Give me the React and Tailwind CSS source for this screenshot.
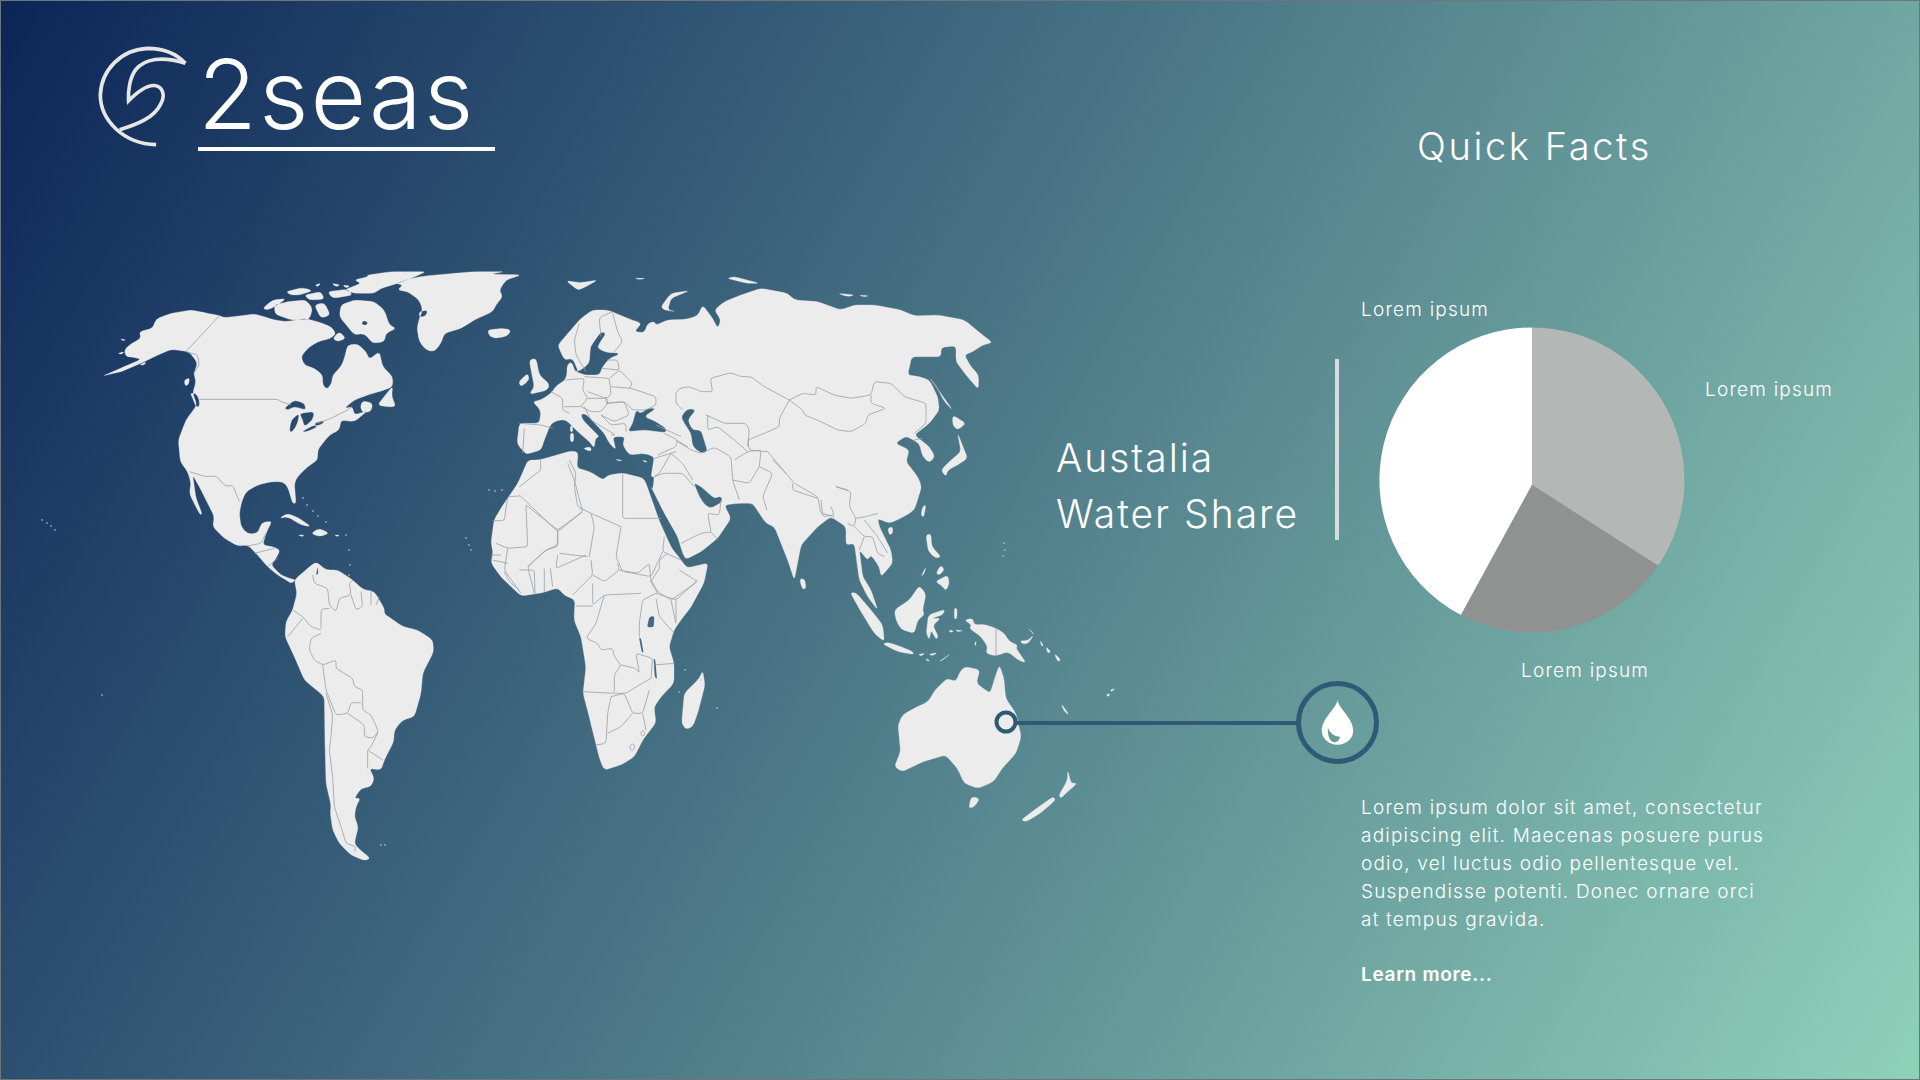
// Slide "2seas": mapa mundial con ficha de datos de Australia
const NORTH_AMERICA = [
  "M35 378 100 350 150 328 130 322 105 320 100 300 118 282 150 265 145 245 185 235 195 207 240 190 300 180 340 188 385 197 400 203 450 197 490 192 520 200 550 210 590 215 640 205 680 215 720 230 735 250 720 265 680 275 650 295 630 320 640 345 670 355 695 375 695 405 708 418 722 400 725 375 750 350 760 325 770 285 800 282 825 305 835 328 865 305 875 350 905 380 905 410 880 420 830 435 790 450 760 475 785 470 790 495 830 482 790 515 750 510 745 540 715 555 695 580 680 600 680 630 650 650 620 680 610 700 615 760 605 760 590 710 575 695 540 695 500 705 465 725 452 755 445 790 450 830 470 852 500 850 512 818 543 813 525 850 515 885 545 890 568 900 555 925 540 945 570 975 595 985 615 990 600 1000 585 990 560 975 530 950 495 910 470 885 440 888 400 865 365 830 370 800 345 750 325 710 305 675 315 745 333 790 328 795 312 765 295 730 300 700 290 665 268 635 262 570 285 510 318 465 305 430 315 395 308 370 320 340 295 305 240 298 190 320 150 340 90 365Z",
  "M580 475 610 450 640 460 645 480 610 470 590 480Z",
  "M595 545 600 510 625 490 620 520 605 545Z",
  "M625 490 670 485 665 510 640 530 635 510Z",
  "M632 545 670 525 680 530 650 545Z",
  "M670 520 700 510 695 522 675 528Z",
  "M298 430 315 430 325 450 325 470 315 470 305 445Z",
  "M815 452 845 460 840 485 815 488 808 470Z",
  "M280 390 296 384 292 405 282 407Z",
  "M915 100 960 85 1000 78 1090 70 1150 65 1240 65 1200 72 1290 75 1245 90 1225 120 1235 140 1215 165 1205 185 1150 210 1110 235 1060 250 1050 280 1030 305 1005 300 985 275 978 235 985 205 995 180 985 150 950 125 920 120 935 105Z",
  "M985 185 1010 180 1005 198 985 202Z",
  "M830 75 900 65 1005 65 960 85 920 100 870 115 850 130 790 130 760 120 810 100 790 90 830 80Z",
  "M750 165 790 150 850 155 880 180 895 225 915 235 885 250 880 275 845 280 820 250 790 255 770 230 745 200Z",
  "M815 212 830 215 828 226 812 224Z",
  "M550 165 590 155 645 150 665 175 655 208 600 210 552 192Z",
  "M515 175 545 150 585 146 560 165 530 180Z",
  "M585 125 635 113 665 122 625 135 600 135Z",
  "M640 135 690 125 700 148 655 150Z",
  "M670 165 700 158 718 195 690 205Z",
  "M710 125 770 118 785 135 725 145Z",
  "M722 100 748 105 735 110Z",
  "M755 105 778 108 765 114Z",
  "M672 105 690 100 680 110Z",
  "M725 265 745 245 765 265 740 275Z",
  "M1190 240 1235 235 1260 240 1250 258 1215 265 1195 258Z",
  "M860 465 895 420 905 410 902 440 915 470 885 470Z",
  "M565 805 590 790 625 805 660 830 630 825 590 800Z",
  "M660 850 685 835 715 850 685 860Z",
  "M730 855 745 855 740 860Z",
  "M620 855 640 855 635 860Z",
  "M80 310 100 305 92 313Z",
  "M88 266 105 270 95 272Z",
  "M145 345 165 335 160 345Z",
];

const NA_BORDERS = [
  "M385 197 285 305",
  "M285 305 320 315 325 345 308 370",
  "M325 448 560 448 570 455 600 465",
  "M680 520 720 505 770 480 785 468",
  "M295 665 345 680 375 678 405 710 425 705 445 755",
  "M470 888 510 880 525 850",
  "M490 910 550 895",
  "M530 950 560 925",
  "M1285 735 1400 845 1475 785 1450 690 1430 640",
  "M1205 812 1240 812 1250 740 1285 738",
  "M1305 765 1310 890 1250 895 1215 880",
  "M1400 845 1400 890 1365 900 1310 950 1330 1030",
  "M1250 895 1240 960 1290 1030",
  "M1205 930 1250 940",
];

const SOUTH_AMERICA =
  "M135 35 165 60 200 60 245 90 275 118 310 125 340 175 340 192 360 205 395 230 440 240 485 270 488 305 455 370 450 430 430 500 395 510 370 540 368 575 340 630 330 660 295 655 310 685 300 710 270 715 250 745 268 745 255 770 250 800 262 830 250 880 262 895 298 925 280 932 240 915 205 880 185 840 178 790 180 765 165 700 162 580 160 440 100 390 70 320 42 260 45 215 65 180 78 130 70 90 110 55Z";

const MADAGASCAR = "M1295 362 1302 405 1280 490 1265 530 1245 538 1232 520 1240 430 1285 385Z";

const LAKES = [
  "M135 75 140 50 142 72Z",
  "M1128 232 1135 200 1150 198 1148 232Z",
  "M1104 262 1110 265 1118 310 1112 305Z",
  "M1148 325 1153 330 1158 388 1151 380Z",
];

const SA_AFRICA_BORDERS = [
  "M125 75 130 100 170 115 175 165 195 185 205 145 240 135 235 100 245 90",
  "M240 135 255 180 275 170 270 125",
  "M300 120 300 165",
  "M325 140 315 165",
  "M175 175 150 178 150 235",
  "M65 180 95 200 120 230 150 240",
  "M50 260 95 205",
  "M150 250 120 265 115 300 130 330 155 345 195 330 195 355 245 385 250 410 275 420 275 480 300 495 312 520 322 545 300 590 290 600 335 630",
  "M155 345 165 420 195 495 230 490 240 458 270 458",
  "M165 430 185 495 180 560 175 600 185 680 190 770 210 830 225 880 255 890 250 905",
  "M230 490 280 525 280 560 305 565 322 545",
  "M290 600 290 655",
  "M660 15 690 15",
  "M700 65 715 95 745 120",
  "M745 60 790 60 792 130",
  "M820 55 820 125",
  "M838 55 845 110",
  "M860 15 855 55 945 15",
  "M960 30 965 75 905 135",
  "M965 100 965 165 1000 135 1110 130",
  "M915 168 965 168",
  "M1000 135 975 220 945 265 980 280 990 300 1025 295 1030 320 1050 345 1030 375 1030 430 935 425",
  "M1050 345 1095 355 1105 370 1095 310 1145 325 1140 385",
  "M1030 430 1065 430 1105 405 1140 385",
  "M1020 440 1010 490 1005 580 975 585",
  "M1020 440 1060 430 1085 490 1115 490 1135 420",
  "M1010 550 1050 530 1085 490",
  "M1115 490 1125 540",
  "M1155 130 1115 150 1105 220 1105 260",
  "M1155 145 1165 200 1210 250",
  "M1215 150 1215 215",
  "M1155 130 1215 150 1280 90",
  "M1140 95 1160 130",
  "M1045 60 1100 70 1135 40 1140 95",
  "M1040 40 1045 60 1000 95 965 75",
  "M1165 55 1140 95",
  "M1190 10 1165 30 1165 55",
  "M1150 345 1210 340",
  "M1075 590 1085 580 1093 590 1082 605Z",
  "M1108 550 1115 540 1123 550 1115 560Z",
];

// África en coordenadas de página
const AFRICA =
  "M527 460 538 460 570 451 577 452 576 468 590 472 602 480 607 475 622 473 642 478 645 483 658 520 670 547 680 560 686 568 707 563 703 583 690 607 680 620 673 630 668 647 673 663 673 683 660 697 653 707 655 723 643 738 633 757 620 765 603 770 598 757 589 720 582 693 585 667 580 637 573 620 574 600 563 595 557 588 540 593 520 596 500 577 490 563 492 552 490 543 493 520 500 508 517 483Z";

const EURASIA = [
  "M85 580 75 582 48 552 55 490 115 490 120 452 95 425 120 420 150 400 165 378 190 362 198 345 198 315 212 305 222 335 232 335 215 295 190 300 172 260 175 250 240 175 275 150 320 150 380 175 422 190 400 215 430 218 440 190 460 185 465 195 500 180 555 178 590 168 605 135 635 175 650 205 660 180 640 150 670 125 720 105 780 85 860 100 880 120 950 125 1020 150 1060 135 1120 135 1200 150 1240 168 1310 165 1390 180 1445 225 1475 248 1445 255 1415 275 1390 285 1410 320 1433 345 1432 388 1395 345 1365 305 1365 258 1320 262 1320 290 1232 290 1220 345 1255 350 1285 360 1310 410 1315 450 1285 490 1240 525 1285 560 1302 590 1285 608 1265 590 1255 550 1215 528 1183 550 1225 570 1215 605 1250 650 1262 680 1240 750 1205 772 1165 790 1130 775 1135 800 1170 870 1175 910 1140 950 1135 920 1110 885 1100 900 1075 870 1080 910 1085 950 1110 990 1130 1050 1100 1010 1075 960 1060 850 1035 855 1035 800 990 770 950 800 900 855 880 960 860 900 820 800 795 790 755 730 710 730 670 735 690 775 650 835 600 875 555 898 545 880 530 830 490 760 450 680 455 690 460 650 450 650 460 590 430 580 385 585 365 555 372 530 335 530 345 570 325 550 310 520 255 462 240 462 245 480 295 530 283 535 280 565 265 545 230 515 195 480 175 480 150 490 130 540 120 570Z",
  "M240 340 222 335 240 330 265 310 268 260 300 215 315 220 295 250 290 265 318 278 350 278 352 285 325 295 305 320 295 345 250 345Z",
  "M540 470 560 445 585 450 560 480 575 510 600 510 620 575 600 580 575 560 570 520 550 490Z",
  "M395 490 380 515 430 510 495 518 495 505 465 485 430 470 465 445 440 445 420 460 405 450Z",
  "M578 668 600 680 640 715 660 708 665 725 630 745 612 735 595 710Z",
  "M900 955 912 960 915 985 905 988 897 965Z",
  "M85 300 105 295 115 345 145 372 140 390 85 403 100 380 90 330Z",
  "M53 365 80 340 85 360 60 380Z",
  "M245 565 270 560 270 575Z",
  "M208 520 218 520 218 545 208 545Z",
  "M208 498 215 498 215 515 208 515Z",
  "M345 597 365 602 350 602Z",
  "M425 600 440 605 430 606Z",
  "M195 62 240 68 290 60 245 85 230 90Z",
  "M400 55 435 55 415 58Z",
  "M480 140 510 100 565 92 510 115 500 150 525 155 490 150Z",
  "M678 55 700 50 775 70 740 70Z",
  "M1010 100 1060 105 1040 110Z",
  "M1075 105 1105 108 1085 110Z",
  "M1320 630 1345 605 1380 575 1370 520 1400 595 1370 615 1340 630 1335 650Z",
  "M1355 465 1395 490 1370 510 1355 495Z",
  "M1285 352 1355 450 1330 425 1310 385Z",
  "M1265 740 1275 735 1268 772 1260 765Z",
  "M1160 805 1175 800 1175 820 1165 825Z",
];

const EURASIA_BORDERS = [
  "M118 595 120 630 55 680",
  "M205 600 225 640 220 680 230 740 270 760 360 800",
  "M365 640 365 775 480 775",
  "M245 755 170 810 75 735",
  "M360 800 350 860 345 890 365 935",
  "M270 760 280 800 265 890",
  "M170 810 170 855 135 870 80 920",
  "M175 880 260 890",
  "M490 830 485 875 540 900",
  "M485 875 450 950 370 935",
  "M450 960 470 995 510 1020 590 965 535 930",
  "M510 1020 525 1090",
  "M460 650 475 640 510 580",
  "M460 650 485 640 545 640 580 680",
  "M510 580 545 610 575 660",
  "M525 575 460 595",
  "M530 545 570 570 600 580 640 562 690 590 695 660 715 720",
  "M695 660 745 670 775 620 780 570 740 575 700 600",
  "M775 620 815 640 785 710 798 750",
  "M815 600 855 640 880 670 950 710 960 760 1000 770",
  "M800 575 855 640",
  "M875 670 875 690 950 715",
  "M960 720 965 770 1000 765 990 740",
  "M1005 680 1050 695 1045 740 1065 775 1060 800 1040 790",
  "M540 850 600 820 630 815 650 840",
  "M630 815 620 760 655 765 660 720",
  "M525 400 535 385 565 380 600 395 635 395 628 355 690 338 720 350 750 350 790 380 865 420",
  "M865 420 905 400 945 405 945 380 1000 405 1050 415 1110 405 1120 365 1170 370 1210 410 1275 430 1275 490 1240 520",
  "M865 420 905 450 910 465 960 485 1010 510 1050 515 1095 490 1100 465 1155 445 1110 430 1110 405",
  "M865 420 835 475 835 500 790 520 740 540 745 570 800 575",
  "M615 465 670 490 735 490 745 510 740 560",
  "M620 465 620 510 650 500 700 540 740 575",
  "M525 400 525 430 545 450",
  "M1240 540 1265 535",
  "M1005 680 1040 690",
  "M1065 775 1095 770 1130 760",
  "M1090 780 1130 830 1160 880",
  "M1060 800 1090 830 1115 830 1130 880 1150 890",
  "M1075 870 1090 830",
];

// Bordes de Europa, calcados a mayor aumento
const EUROPE_BORDERS = [
  "M150 275 185 295 185 330 205 340",
  "M70 385 65 460",
  "M55 370 120 375 155 385",
  "M190 240 250 235 245 270 260 295 240 320 190 320",
  "M250 230 325 235 330 285 315 295 260 275",
  "M330 260 390 265 465 290 465 315 435 330 395 330 370 305 315 310 315 295",
  "M325 235 355 210 395 250 385 265",
  "M300 205 355 210 350 180 320 180",
  "M260 295 320 295 320 310 300 335 270 335 240 320",
  "M315 310 370 305 385 345 340 365 300 345",
  "M300 345 330 375 375 370 375 395",
  "M310 385 345 405 330 405",
  "M235 70 220 120 225 165 255 215",
  "M295 60 300 50 335 35",
  "M295 60 300 110",
  "M335 40 350 95 365 125 340 155",
  "M465 375 540 410",
  "M490 400 530 420 525 440 470 465",
  "M525 420 560 440",
  "M250 320 270 360 310 385",
];

const OCEANIA = [
  "M255 45 270 42 272 80 300 110 285 115 262 95Z",
  "M285 160 300 135 310 150 295 165Z",
  "M283 185 320 165 325 190 315 212 300 195Z",
  "M240 170 255 140 250 160Z",
  "M160 270 205 240 235 197 255 222 245 270 250 285 230 300 220 340 180 328 165 300Z",
  "M262 285 312 268 305 285 270 295 300 295 275 315 292 350 285 358 270 330 265 360 256 340Z",
  "M28 218 45 218 90 270 125 315 130 365 100 340 60 275Z",
  "M125 372 140 367 180 380 215 395 218 403 170 395Z",
  "M232 403 252 400 240 408Z",
  "M262 403 290 398 275 407Z",
  "M255 415 267 423 258 423Z",
  "M295 425 330 400 305 420Z",
  "M370 300 395 295 400 315 430 313 465 325 490 340 505 365 530 375 525 385 555 428 535 422 500 395 465 408 435 400 440 380 420 350 385 325 392 315Z",
  "M537 362 560 362 578 345 562 370 545 372Z",
  "M562 325 582 345 570 335Z",
  "M322 333 335 330 335 338Z",
  "M342 330 368 332 350 335Z",
  "M400 375 405 362 405 376Z",
  "M340 265 348 265 348 295 340 298Z",
  "M598 360 608 380 600 375Z",
  "M615 380 630 395 620 400Z",
  "M640 400 660 420 650 425Z",
  "M660 550 685 585 670 575Z",
  "M795 525 805 520 805 530Z",
  "M808 510 822 505 812 515Z",
];

const AUSTRALIA = [
  "M110 310 120 285 160 262 195 245 215 210 250 175 275 185 290 150 305 140 345 150 335 190 375 220 390 170 402 135 415 175 420 235 450 280 465 350 450 400 410 445 385 485 340 505 300 490 280 445 245 405 180 425 120 455 97 440 115 395 108 320Z",
  "M320 530 345 535 330 560 313 565Z",
  "M600 450 610 490 628 490 600 515 580 535 575 525 600 480Z",
  "M465 600 510 565 558 530 565 540 520 580 480 605Z",
];

// Islas diminutas en coordenadas de página
const SPECKS = [
  [41, 520], [46, 523], [50, 526], [54, 530], [101, 695], [302, 498], [306, 505], [312, 511], [317, 516], [325, 522],
  [345, 535], [348, 550], [349, 565], [348, 575], [488, 490], [494, 491], [501, 490], [465, 538], [468, 545], [470, 550],
  [380, 845], [384, 845], [678, 692], [684, 670], [700, 680], [716, 708], [1003, 543], [1004, 550], [1002, 556],
];

// Redondea las esquinas de cada trazo para que la costa no se vea poligonal
function smooth(d, cap = 12) {
  return d
    .split("M")
    .filter(Boolean)
    .map((part) => {
      const closed = part.includes("Z");
      const n = part.replace("Z", "").trim().split(/\s+/).map(Number);
      const pts = [];
      for (let i = 0; i < n.length; i += 2) pts.push([n[i], n[i + 1]]);
      if (pts.length < 3) return "M" + part;
      const toward = (a, b) => {
        const dx = b[0] - a[0];
        const dy = b[1] - a[1];
        const k = Math.min(0.4, cap / (Math.hypot(dx, dy) || 1));
        return [(a[0] + dx * k).toFixed(1), (a[1] + dy * k).toFixed(1)];
      };
      let out = "";
      pts.forEach((p, i) => {
        const prev = pts[(i - 1 + pts.length) % pts.length];
        const next = pts[(i + 1) % pts.length];
        if (!closed && i === 0) {
          out += `M${p[0]} ${p[1]}`;
        } else if (!closed && i === pts.length - 1) {
          out += `L${p[0]} ${p[1]}`;
        } else {
          const a = toward(p, prev);
          const b = toward(p, next);
          out += `${out ? "L" : "M"}${a[0]} ${a[1]}Q${p[0]} ${p[1]} ${b[0]} ${b[1]}`;
        }
      });
      return out + (closed ? "Z" : "");
    })
    .join(" ");
}

function Borders({ list }) {
  return list.map((d) => <path key={d} d={smooth(d, 8)} vectorEffect="non-scaling-stroke" />);
}

function WorldMap() {
  return (
    <svg viewBox="0 150 1056 930" width="1056" height="930" className="block overflow-visible">
      <g fill="#ececec" fillRule="evenodd" stroke="#ececec" strokeLinejoin="round">
        <g transform="translate(90 250) scale(.33333)" strokeWidth="1">
          <path d={smooth(NORTH_AMERICA.join(" "))} />
        </g>
        <g transform="translate(270 550) scale(.33333)" strokeWidth="1">
          <path d={smooth(SOUTH_AMERICA)} />
          <path d={smooth(MADAGASCAR)} />
        </g>
        <path d={smooth(AFRICA, 4)} strokeWidth=".3" />
        <g transform="translate(500 260) scale(.33333)" strokeWidth="1">
          <path d={smooth(EURASIA.join(" "))} />
        </g>
        <g transform="translate(840 520) scale(.33333)" strokeWidth="1">
          <path d={smooth(OCEANIA.join(" "))} />
        </g>
        <g transform="translate(860 620) scale(.34437 .33333)" strokeWidth="1">
          <path d={smooth(AUSTRALIA.join(" "))} />
        </g>
      </g>
      {/* Lagos de África y Colombia, con el color del fondo a esa altura */}
      <g transform="translate(270 550) scale(.33333)" fill="#436a80">
        {LAKES.map((d) => <path key={d} d={smooth(d, 6)} />)}
      </g>
      <g fill="none" stroke="#9a9fa3" strokeWidth=".8" strokeLinejoin="round">
        <g transform="translate(90 250) scale(.33333)"><Borders list={NA_BORDERS} /></g>
        <g transform="translate(270 550) scale(.33333)"><Borders list={SA_AFRICA_BORDERS} /></g>
        <g transform="translate(500 260) scale(.33333)"><Borders list={EURASIA_BORDERS} /></g>
        <g transform="translate(500 300) scale(.33333)"><Borders list={EUROPE_BORDERS} /></g>
        <path d="M995 628V656" />
      </g>
      <g fill="#c3cbcf" fillOpacity=".7">
        {SPECKS.map(([x, y]) => <circle key={x + "-" + y} cx={x} cy={y} r=".9" />)}
      </g>
      {/* Conector hasta el icono de agua */}
      <path d="M1016 723H1298" stroke="#2f5a75" strokeWidth="4" fill="none" />
      <circle cx="1005" cy="722" r="9.5" fill="#ececec" stroke="#2f5a75" strokeWidth="4" />
    </svg>
  );
}

function Logo() {
  return (
    <svg viewBox="55 75 268 310" width="89" height="103" fill="none" stroke="#e6e6e6" strokeWidth="11" className="shrink-0">
      <path d="M318 130C290 100 250 85 205 85C125 88 65 150 62 225C62 300 130 372 230 375" />
      <path d="M318 130C250 108 195 115 168 150C150 175 145 215 147 243C170 220 200 195 225 197C250 200 258 225 245 250C225 295 170 315 120 330" />
    </svg>
  );
}

function PieChart() {
  return (
    <svg viewBox="1379 327 306 306" width="306" height="306" className="block">
      <path d="M1532 327.500A152.500 152.500 0 0 0 1461 615L1532 485Z" fill="#ffffff" />
      <path d="M1532 327.500A152.500 152.500 0 0 1 1658.100 565.700L1532 485Z" fill="#b3b8b7" />
      <path d="M1658.100 565.700A152.500 152.500 0 0 1 1461 615L1532 485Z" fill="#8f9291" />
    </svg>
  );
}

function DropIcon() {
  return (
    <div className="flex h-[83px] w-[83px] items-center justify-center rounded-full border-[5px] border-[#2f5a75]">
      <svg viewBox="0 0 82 82" width="83" height="83" className="shrink-0">
        <path
          fillRule="evenodd"
          fill="#ffffff"
          d="M41 19C39 28 25.500 37 25.500 49C25.500 57 32 63 41 63C50 63 56.500 57 56.500 49C56.500 37 43 28 41 19ZM31.500 46C31 53 33 60.500 38 60.500C41 60.500 43 58 43.500 55C38 55 33.500 52 31.500 46Z"
        />
      </svg>
    </div>
  );
}

export default function App() {
  return (
    <div className="flex h-[1080px] w-[1920px] overflow-hidden border border-[#6f7679] bg-linear-120/srgb from-[#0c2558] to-[#90d1ba] font-['Inter',sans-serif] text-white">
      {/* Logo y mapa */}
      <div className="w-[1055px] shrink-0">
        <div className="flex h-[149px] items-start gap-[11px] pl-[97px] pt-[44px]">
          <Logo />
          <div className="h-[106px] w-[297px] border-b-4 border-white pt-[9px] text-[96px] font-[350] leading-[80px] tracking-[2px]">
            2seas
          </div>
        </div>
        <WorldMap />
      </div>

      {/* Datos rápidos */}
      <div className="w-[864px]">
        <h2 className="ml-[361px] mt-[123px] text-[38px] font-light leading-[44px] tracking-[2.6px]">Quick Facts</h2>

        <div className="mt-[159px] flex items-start">
          <div className="mt-[103px] w-[279px] text-[39px] font-light leading-[56px] tracking-[2px]">
            <div>Austalia</div>
            <div>Water Share</div>
          </div>
          <div className="mt-[32px] h-[181px] w-1 bg-[#d7dddc]" />
          <div className="relative ml-[40px]">
            <PieChart />
            <span className="absolute left-[-18px] top-[-31px] whitespace-nowrap text-[19px] font-light tracking-[1.2px]">Lorem ipsum</span>
            <span className="absolute left-[326px] top-[49px] whitespace-nowrap text-[19px] font-light tracking-[1.2px]">Lorem ipsum</span>
            <span className="absolute left-[142px] top-[330px] whitespace-nowrap text-[19px] font-light tracking-[1.2px]">Lorem ipsum</span>
          </div>
        </div>

        <div className="ml-[240px] mt-[48px]">
          <DropIcon />
        </div>

        <div className="ml-[305px] mt-[30px] w-[430px] text-[19px] font-light leading-[28px] tracking-[1.2px]">
          <p>
            Lorem ipsum dolor sit amet, consectetur
            <br />
            adipiscing elit. Maecenas posuere purus
            <br />
            odio, vel luctus odio pellentesque vel.
            <br />
            Suspendisse potenti. Donec ornare orci
            <br />
            at tempus gravida.
          </p>
          <p className="mt-[27px] font-semibold tracking-[.7px]">Learn more...</p>
        </div>
      </div>
    </div>
  );
}
